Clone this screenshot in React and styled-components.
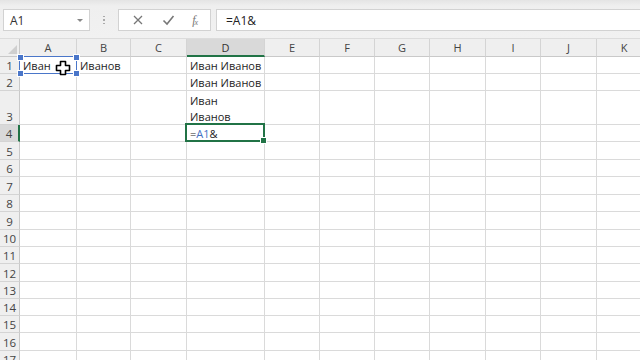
import React from 'react';
import styled, { createGlobalStyle } from 'styled-components';

const Global = createGlobalStyle`
  html, body { margin: 0; padding: 0; background: #ffffff; overflow: hidden; }
  body { font-family: "Open Sans", "Liberation Sans", Arial, sans-serif; }
`;

const COLS = [
  { name: 'A', w: 57 }, { name: 'B', w: 54 }, { name: 'C', w: 56 }, { name: 'D', w: 78 },
  { name: 'E', w: 55 }, { name: 'F', w: 55 }, { name: 'G', w: 55 }, { name: 'H', w: 56 },
  { name: 'I', w: 55 }, { name: 'J', w: 56 }, { name: 'K', w: 55 },
];
const ROWS = [17, 17, 34, 17, 18, 17, 18, 17, 18, 17, 17, 18, 17, 17, 17, 18, 17];

const Screen = styled.div`width: 640px; height: 360px; overflow: hidden; display: flex; flex-direction: column; background: #fff;`;

const TopBar = styled.div`
  flex-shrink: 0;
  height: 39px; box-sizing: border-box; padding: 9px 0 0 3px;
  background: linear-gradient(#e4e4e4 0px, #efefef 6px, #f1f1f1 100%);
  display: flex; align-items: flex-start; border-bottom: 1px solid #dcdcdc;
`;
const NameBox = styled.div`
  width: 87px; height: 22px; box-sizing: border-box; background: #fff; border: 1px solid #d2d2d2;
  display: flex; align-items: center; justify-content: space-between; padding: 0 6px 0 6px;
  font-size: 12px; color: #333;
`;
const Caret = styled.span`width: 0; height: 0; border-left: 3px solid transparent; border-right: 3px solid transparent; border-top: 3px solid #888;`;
const Grip = styled.div`width: 28px; height: 22px; display: flex; flex-direction: column; align-items: center; justify-content: center; gap: 2px;
  & > i { width: 1.5px; height: 1.5px; background: #aaa; display: block; }
`;
const Buttons = styled.div`
  width: 93px; height: 22px; box-sizing: border-box; background: #fff; border: 1px solid #d2d2d2;
  display: flex; align-items: center; justify-content: space-around; padding: 0 4px; color: #777;
`;
const Fx = styled.span`font-family: "Liberation Serif", serif; font-style: italic; font-size: 12px; color: #777; letter-spacing: -1px;
  & > sub { font-size: 8px; vertical-align: -1px; }
`;
const Formula = styled.div`
  flex: 1; margin-left: 5px; height: 22px; box-sizing: border-box; background: #fff; border: 1px solid #d2d2d2; border-right: none;
  display: flex; align-items: center; padding-left: 9px; font-size: 12px; color: #222;
`;

const Sheet = styled.div`
  flex-shrink: 0;
  display: grid;
  grid-template-columns: 20px ${COLS.map(c => c.w + 'px').join(' ')};
  grid-template-rows: 18px ${ROWS.map(r => r + 'px').join(' ')};
  font-family: "Open Sans", "Liberation Sans", sans-serif;
`;
const Corner = styled.div`
  background: #efefef; border-right: 1px solid #c9c9c9; border-bottom: 1px solid #c9c9c9; box-sizing: border-box; position: relative;
  &::after { content: ''; position: absolute; right: 2px; bottom: 2px; border-left: 9px solid transparent; border-bottom: 9px solid #cfcfcf; }
`;
const ColHead = styled.div`
  background: ${p => p.$on ? '#d9d9d9' : '#efefef'}; box-sizing: border-box;
  border-right: 1px solid #d4d4d4;
  border-bottom: ${p => p.$on ? '2px solid #217346' : '1px solid #c9c9c9'};
  display: flex; align-items: center; justify-content: center; font-size: 11px; color: ${p => p.$on ? '#333' : '#444'};
`;
const RowHead = styled.div`
  background: ${p => p.$on ? '#d9d9d9' : '#efefef'}; box-sizing: border-box;
  border-bottom: 1px solid #d4d4d4;
  border-right: ${p => p.$on ? '2px solid #217346' : '1px solid #c9c9c9'};
  display: flex; align-items: flex-end; justify-content: center; padding-bottom: 0; font-size: 11.5px; color: #444;
`;
const Cell = styled.div`
  box-sizing: border-box; border-right: 1px solid #dadada; border-bottom: 1px solid #dadada;
  position: relative; display: flex; flex-direction: column; justify-content: flex-end;
  padding: 0 2px 0 3px; font-size: 11px; color: #1e1e1e; line-height: 16px; white-space: nowrap;
  & > span:last-of-type, & > .t { margin-bottom: -1px; }
`;
const Ref = styled.span`color: #4472c4;`;

const Frame = styled.div`
  position: absolute; pointer-events: none; z-index: 2;
  left: ${p => p.$green ? -2 : -1}px; top: ${p => p.$green ? -2 : -1}px; right: -1px; bottom: -1px;
  border: ${p => p.$green ? '2px solid #217346' : '1px solid #4a76c9'};
`;
const Handle = styled.span`
  position: absolute; width: 5px; height: 5px; background: ${p => p.$c}; border: 1px solid #fff;
  ${p => p.$pos.includes('t') ? 'top: -3px;' : 'bottom: -4px;'}
  ${p => p.$pos.includes('l') ? 'left: -3px;' : 'right: -4px;'}
`;
const Pointer = styled.svg`position: absolute; left: 35px; top: 3px; z-index: 3;`;

const content = {
  'D1': 'Иван Иванов',
  'D2': 'Иван Иванов',
  'D3': ['Иван', 'Иванов'],
  'B1': 'Иванов',
};

export default function App() {
  const cells = [];
  cells.push(<Corner key="corner" />);
  COLS.forEach(c => cells.push(<ColHead key={'h' + c.name} $on={c.name === 'D'}>{c.name}</ColHead>));
  ROWS.forEach((_, ri) => {
    const r = ri + 1;
    cells.push(<RowHead key={'r' + r} $on={r === 4}>{r}</RowHead>);
    COLS.forEach(c => {
      const id = c.name + r;
      let inner = null;
      if (id === 'A1') {
        inner = (
          <>
            <div className="t">Иван</div>
            <Frame>
              <Handle $pos="tl" $c="#4a76c9" /><Handle $pos="tr" $c="#4a76c9" />
              <Handle $pos="bl" $c="#4a76c9" /><Handle $pos="br" $c="#4a76c9" />
            </Frame>
            <Pointer width="16" height="16" viewBox="0 0 16 16">
              <path d="M5.5 1.5h5v4h4v5h-4v4h-5v-4h-4v-5h4z" fill="#fff" stroke="#000" strokeWidth="1.6" strokeLinejoin="round" />
            </Pointer>
          </>
        );
      } else if (id === 'D4') {
        inner = (
          <>
            <div className="t">=<Ref>A1</Ref>&amp;</div>
            <Frame $green><Handle $pos="br" $c="#217346" /></Frame>
          </>
        );
      } else if (Array.isArray(content[id])) {
        inner = content[id].map(t => <span key={t}>{t}</span>);
      } else if (content[id]) {
        inner = <span>{content[id]}</span>;
      }
      cells.push(<Cell key={id}>{inner}</Cell>);
    });
  });

  return (
    <Screen>
      <Global />
      <TopBar>
        <NameBox>A1<Caret /></NameBox>
        <Grip><i /><i /><i /></Grip>
        <Buttons>
          <svg width="12" height="12" viewBox="0 0 12 12"><path d="M2 2l8 8M10 2l-8 8" stroke="#777" strokeWidth="1.3" /></svg>
          <svg width="13" height="12" viewBox="0 0 13 12"><path d="M1.5 6.5l3.5 3.5 6.5-8" stroke="#777" strokeWidth="1.6" fill="none" /></svg>
          <Fx>f<sub>x</sub></Fx>
        </Buttons>
        <Formula>=A1&amp;</Formula>
      </TopBar>
      <Sheet>{cells}</Sheet>
    </Screen>
  );
}
